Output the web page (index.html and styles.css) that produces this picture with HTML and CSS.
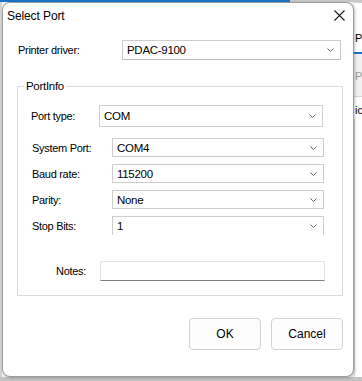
FILE: index.html
```html
<!DOCTYPE html>
<html lang="en">
<head>
    <meta charset="UTF-8">
    <title>Select Port</title>
    <link rel="stylesheet" href="styles.css">
</head>
<body>
    <div class="app">
        <div class="app-top">
            <div class="app-accent"></div>
            <div class="app-tabs"></div>
        </div>
        <div class="app-body">
            <div class="app-left"></div>
            <div class="app-main"></div>
            <div class="app-right">
                <div class="side-cell side-white"></div>
                <div class="side-cell side-head">P</div>
                <div class="side-cell side-grey">P</div>
                <div class="side-cell side-row">ic</div>
                <div class="side-cell side-rest"></div>
            </div>
        </div>
        <div class="app-bottom"></div>
    </div>

    <div class="dialog">
        <div class="titlebar">
            <span class="title">Select Port</span>
            <svg class="close" width="11" height="11" viewBox="0 0 11 11">
                <path d="M0.5 0.5 L10.5 10.5 M10.5 0.5 L0.5 10.5" stroke="#1a1a1a" stroke-width="1.1" fill="none"/>
            </svg>
        </div>

        <div class="driver-row">
            <label class="driver-label">Printer driver:</label>
            <div class="combo combo-driver">
                <span>PDAC-9100</span>
                <svg class="chev" width="7" height="4" viewBox="0 0 7 4"><path d="M0.5 0.5 L3.5 3.5 L6.5 0.5" stroke="#666" fill="none"/></svg>
            </div>
        </div>

        <fieldset class="portinfo">
            <legend>PortInfo</legend>
            <div class="row row-type">
                <label class="lbl-type">Port type:</label>
                <div class="combo combo-type">
                    <span>COM</span>
                    <svg class="chev" width="7" height="4" viewBox="0 0 7 4"><path d="M0.5 0.5 L3.5 3.5 L6.5 0.5" stroke="#666" fill="none"/></svg>
                </div>
            </div>
            <div class="row">
                <label class="lbl">System Port:</label>
                <div class="combo combo-small">
                    <span>COM4</span>
                    <svg class="chev" width="7" height="4" viewBox="0 0 7 4"><path d="M0.5 0.5 L3.5 3.5 L6.5 0.5" stroke="#666" fill="none"/></svg>
                </div>
            </div>
            <div class="row">
                <label class="lbl">Baud rate:</label>
                <div class="combo combo-small">
                    <span>115200</span>
                    <svg class="chev" width="7" height="4" viewBox="0 0 7 4"><path d="M0.5 0.5 L3.5 3.5 L6.5 0.5" stroke="#666" fill="none"/></svg>
                </div>
            </div>
            <div class="row">
                <label class="lbl">Parity:</label>
                <div class="combo combo-small">
                    <span>None</span>
                    <svg class="chev" width="7" height="4" viewBox="0 0 7 4"><path d="M0.5 0.5 L3.5 3.5 L6.5 0.5" stroke="#666" fill="none"/></svg>
                </div>
            </div>
            <div class="row">
                <label class="lbl">Stop Bits:</label>
                <div class="combo combo-small combo-cut">
                    <span>1</span>
                    <svg class="chev" width="7" height="4" viewBox="0 0 7 4"><path d="M0.5 0.5 L3.5 3.5 L6.5 0.5" stroke="#666" fill="none"/></svg>
                </div>
            </div>
            <div class="row row-notes">
                <label class="lbl-notes">Notes:</label>
                <div class="notes-box"></div>
            </div>
        </fieldset>

        <div class="buttons">
            <button class="btn">OK</button>
            <button class="btn">Cancel</button>
        </div>
    </div>
</body>
</html>
```

FILE: styles.css
```css
html, body {
    margin: 0;
    padding: 0;
}

body {
    width: 362px;
    height: 381px;
    overflow: hidden;
    position: relative;
    font-family: "Liberation Sans", Arial, sans-serif;
    font-size: 11px;
    color: #000;
    background-color: #e6e6e6;
}

/* window behind the dialog */
.app {
    display: flex;
    flex-direction: column;
    height: 381px;
}

.app-top {
    display: flex;
    height: 2px;
}

.app-accent {
    width: 290px;
    background-color: #1673c8;
}

.app-tabs {
    flex: 1;
    background-color: #c9c9c9;
}

.app-body {
    flex: 1;
    display: flex;
}

.app-left {
    width: 2px;
    background-color: #d4d4d4;
}

.app-main {
    flex: 1;
    background-color: #f3f3f3;
}

.app-right {
    width: 8px;
    display: flex;
    flex-direction: column;
    background-color: #fff;
    font-size: 11px;
}

.side-cell {
    padding-left: 1px;
    overflow: hidden;
    white-space: nowrap;
}

.side-white {
    height: 24px;
    border-top: 1px solid #cfcfcf;
}

.side-head {
    height: 25px;
    line-height: 22px;
    border-bottom: 2px solid #1673c8;
}

.side-grey {
    height: 42px;
    line-height: 44px;
    color: #9a9a9a;
    background-color: #f0f0f0;
    border-bottom: 1px solid #d6d6d6;
}

.side-row {
    height: 22px;
    line-height: 26px;
}

.side-rest {
    flex: 1;
    border-left: 1px solid #e0e0e0;
}

.app-bottom {
    height: 4px;
    background-color: #c4c4c4;
}

/* dialog */
.dialog {
    position: absolute;
    left: 2px;
    top: 2px;
    width: 352px;
    height: 375px;
    box-sizing: border-box;
    background-color: #fff;
    border: 1px solid #9c9c9c;
    border-radius: 8px;
    box-shadow: 1px 1px 3px rgba(0, 0, 0, 0.25);
}

.titlebar {
    height: 25px;
    display: flex;
    align-items: center;
    justify-content: space-between;
    padding: 0 8px 0 4px;
}

.title {
    font-size: 12px;
    letter-spacing: -0.1px;
}

.close {
    display: block;
}

.driver-row {
    display: flex;
    align-items: center;
    margin: 12px 0 0 15px;
}

.driver-label {
    width: 104px;
    letter-spacing: -0.3px;
}

.combo {
    box-sizing: border-box;
    display: flex;
    align-items: center;
    justify-content: space-between;
    background-color: #fff;
    border: 1px solid #cdcdcd;
    padding: 0 6px 0 4px;
    font-size: 11.5px;
    letter-spacing: -0.3px;
}

.combo-driver {
    width: 219px;
    height: 20px;
    border-bottom-color: #bdbdbd;
}

.chev {
    display: block;
}

.portinfo {
    box-sizing: border-box;
    width: 326px;
    margin: 19px 0 0 14px;
    padding: 12px 0 14px 0;
    border: 1px solid #dcdcdc;
    min-width: 0;
}

.portinfo legend {
    margin-left: 6px;
    padding: 0 2px;
    line-height: 14px;
    font-size: 11.5px;
    letter-spacing: -0.3px;
}

.row {
    display: flex;
    align-items: center;
    margin-top: 7px;
    padding-left: 14px;
}

.row-type {
    margin-top: 0;
    margin-bottom: 11px;
    padding-left: 13px;
}

.lbl-type {
    width: 68px;
    letter-spacing: -0.3px;
}

.combo-type {
    width: 224px;
    height: 22px;
}

.lbl {
    width: 80px;
    letter-spacing: -0.3px;
}

.combo-small {
    width: 212px;
    height: 19px;
}

.combo-cut {
    border-bottom: 0;
}

.row-notes {
    margin-top: 26px;
    padding-left: 0;
}

.lbl-notes {
    width: 68px;
    margin-right: 14px;
    text-align: right;
    letter-spacing: -0.3px;
}

.notes-box {
    box-sizing: border-box;
    width: 225px;
    height: 20px;
    border: 1px solid #e3e3e3;
    border-bottom: 1px solid #808080;
}

.buttons {
    display: flex;
    justify-content: flex-end;
    gap: 10px;
    margin-top: 22px;
    padding-right: 10px;
}

.btn {
    width: 72px;
    height: 32px;
    font-family: "Liberation Sans", Arial, sans-serif;
    font-size: 12px;
    color: #000;
    background-color: #fdfdfd;
    border: 1px solid #d2d2d2;
    border-radius: 4px;
    padding: 0;
}
```
